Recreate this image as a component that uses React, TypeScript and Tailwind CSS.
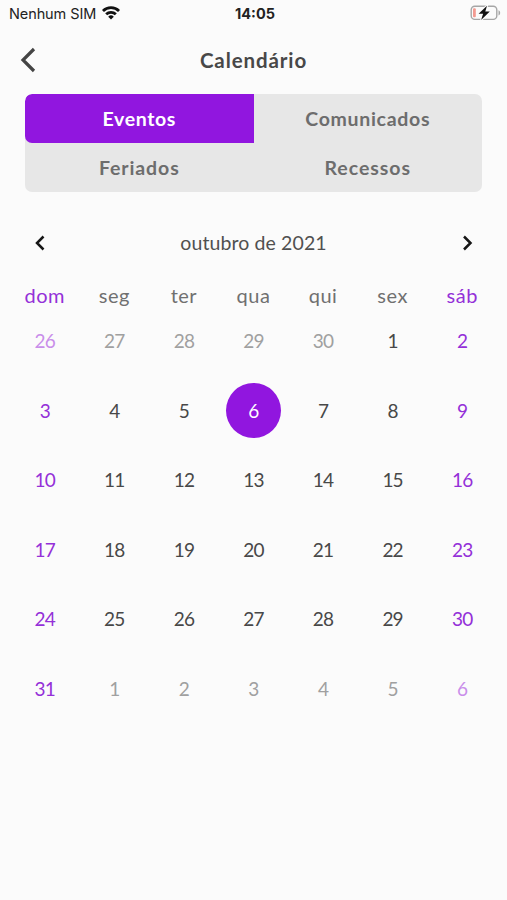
import { useState } from 'react';
import { clsx } from 'clsx';

const TABS = [
  { label: 'Eventos', tracking: 'tracking-[0.6px]' },
  { label: 'Comunicados', tracking: 'tracking-[0.7px]' },
  { label: 'Feriados', tracking: 'tracking-[0.9px]' },
  { label: 'Recessos', tracking: 'tracking-[0.95px]' },
];

const WEEKDAYS = ['dom', 'seg', 'ter', 'qua', 'qui', 'sex', 'sáb'];

// October 2021 starts on a Friday
const FIRST_DAY = new Date(2021, 9, 1 - 5);

const DAYS = Array.from({ length: 42 }, (_, i) => {
  const date = new Date(FIRST_DAY);
  date.setDate(FIRST_DAY.getDate() + i);
  return {
    id: i,
    day: date.getDate(),
    outside: date.getMonth() !== 9,
    weekend: i % 7 === 0 || i % 7 === 6,
  };
});

export default function App() {
  const [tab, setTab] = useState('Eventos');
  const [selected, setSelected] = useState(10);

  return (
    <div className="h-[900px] w-[507px] overflow-hidden bg-[#fbfbfb] font-['Lato',sans-serif] text-[#484848]">
      <StatusBar />

      <header className="grid h-[66px] grid-cols-[60px_1fr_60px] items-center pb-[2px]">
        <button aria-label="Voltar" className="pl-5">
          <svg width="17" height="26" viewBox="0 0 17 26" fill="none" stroke="#444" strokeWidth="3.2">
            <path d="M14 2 3 13l11 11" />
          </svg>
        </button>
        <h1 className="text-center text-[20.5px] leading-6 font-bold tracking-[0.9px]">Calendário</h1>
      </header>

      <div className="mx-[25px] grid h-[97.5px] grid-cols-2 overflow-hidden rounded-[7px] bg-[#e7e7e7]">
        {TABS.map((item) => (
          <button
            key={item.label}
            onClick={() => setTab(item.label)}
            className={clsx(
              'text-[19.5px] font-bold',
              item.tracking,
              tab === item.label ? 'rounded-l-[7px] bg-[#9116df] text-white' : 'text-[#6d6d6d]',
            )}
          >
            {item.label}
          </button>
        ))}
      </div>

      <div className="mt-[37.5px] flex h-7 items-center justify-between px-[34px] text-[#161616]">
        <button aria-label="Mês anterior">
          <Chevron d="M9.5 1.5 3 8l6.5 6.5" />
        </button>
        <span className="text-[19.5px] tracking-[0.1px] text-[#505050]">outubro de 2021</span>
        <button aria-label="Próximo mês">
          <Chevron d="M3 1.5 9.5 8 3 14.5" />
        </button>
      </div>

      <div className="mx-[10px] mt-[23px] grid h-7 grid-cols-7 items-center text-center text-[20px] tracking-[0.5px]">
        {WEEKDAYS.map((name, i) => (
          <span key={name} className={i === 0 || i === 6 ? 'text-[#9430d8]' : 'text-[#707070]'}>
            {name}
          </span>
        ))}
      </div>

      <div className="mx-[10px] mt-[-2px] grid auto-rows-[69.5px] grid-cols-7">
        {DAYS.map(({ id, day, outside, weekend }) => (
          <div key={id} className="flex items-center justify-center">
            <button
              onClick={() => setSelected(id)}
              className={clsx(
                'size-[55px] rounded-full pt-[1.5px] text-[19px] tracking-[-0.8px]',
                id === selected && 'bg-[#9116df] text-white',
                id !== selected && weekend && (outside ? 'text-[#c98eea]' : 'text-[#9430d8]'),
                id !== selected && !weekend && (outside ? 'text-[#a0a0a0]' : 'text-[#484848]'),
              )}
            >
              {day}
            </button>
          </div>
        ))}
      </div>
    </div>
  );
}

function Chevron({ d }: { d: string }) {
  return (
    <svg width="12" height="16" viewBox="0 0 12 16" fill="none" stroke="currentColor" strokeWidth="2.5">
      <path d={d} />
    </svg>
  );
}

function StatusBar() {
  return (
    <div className="grid h-7 grid-cols-[1fr_auto_1fr] items-center pr-[6px] pl-[9px] font-['Inter',sans-serif] text-[#222]">
      <div className="flex items-center gap-[5px]">
        <span className="text-[14.5px] tracking-[-0.1px]">Nenhum SIM</span>
        <svg className="mb-[2px]" width="20" height="14" viewBox="0 0 20 15" fill="none" stroke="#111" strokeWidth="3">
          <path d="M1.4 5.3a12.3 12.3 0 0 1 17.2 0" />
          <path d="M4.8 8.9a7.5 7.5 0 0 1 10.4 0" />
          <path d="M10 14.4 7 11.5a4.3 4.3 0 0 1 6 0z" fill="#111" stroke="none" />
        </svg>
      </div>
      <span className="text-[14.5px] font-bold">14:05</span>
      <svg className="mb-[2px] justify-self-end" width="31" height="16" viewBox="0 0 31 16" fill="none">
        <rect x="1.2" y="1.2" width="25.6" height="13.2" rx="3.6" stroke="#a6a6a6" strokeWidth="1.4" />
        <path d="M28.5 5.2c2.2.8 2.2 4.4 0 5.2z" fill="#a6a6a6" />
        <rect x="3" y="3.3" width="2.8" height="9" rx="1" fill="#f39a91" />
        <path d="M17 .8 8.6 8.8h4.5L11.1 15l8.7-8.4h-4.5z" fill="#111" stroke="#fbfbfb" strokeWidth="2" paintOrder="stroke" />
      </svg>
    </div>
  );
}
